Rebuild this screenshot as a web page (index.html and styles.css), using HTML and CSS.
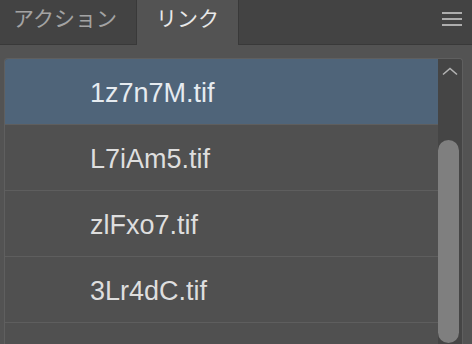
FILE: index.html
```html
<!DOCTYPE html>
<html lang="ja">
<head>
<meta charset="utf-8">
<link rel="stylesheet" href="styles.css">
</head>
<body>
<div class="panel">
  <div class="tabs">
    <div class="tab">アクション</div>
    <div class="tab tab-active">リンク</div>
    <div class="tab-rest">
      <svg class="menu" width="20" height="14" viewBox="0 0 20 14">
        <rect x="0" y="0" width="20" height="2" fill="#adadad"/>
        <rect x="0" y="6" width="20" height="2" fill="#adadad"/>
        <rect x="0" y="12" width="20" height="2" fill="#adadad"/>
      </svg>
    </div>
  </div>
  <div class="body">
    <div class="list">
      <div class="rows">
        <div class="row row-selected">1z7n7M.tif</div>
        <div class="row">L7iAm5.tif</div>
        <div class="row">zlFxo7.tif</div>
        <div class="row">3Lr4dC.tif</div>
        <div class="row"></div>
      </div>
      <div class="scrollbar">
        <svg class="chev" width="16" height="9" viewBox="0 0 16 9">
          <polyline points="1,7.5 8,1.5 15,7.5" fill="none" stroke="#b3b3b3" stroke-width="1.6"/>
        </svg>
        <div class="thumb"></div>
      </div>
    </div>
  </div>
</div>
</body>
</html>
```

FILE: styles.css
```css
html, body {
  margin: 0;
  padding: 0;
  background: #535353;
  overflow: hidden;
  height: 344px;
}
.panel {
  width: 472px;
  height: 344px;
  overflow: hidden;
  font-family: "Liberation Sans", "Noto Sans CJK JP", sans-serif;
}
.tabs {
  display: flex;
  height: 45px;
}
.tab {
  width: 137px;
  box-sizing: border-box;
  background: #434343;
  border-right: 1px solid #393939;
  border-bottom: 1px solid #393939;
  color: #a3a3a3;
  font-family: "Noto Sans CJK JP", sans-serif;
  font-size: 21px;
  line-height: 35px;
  padding-left: 13px;
}
.tab-active {
  width: 101px;
  background: #535353;
  border: none;
  color: #e8e8e8;
  padding-left: 19px;
}
.tab-rest {
  flex: 1;
  box-sizing: border-box;
  background: #434343;
  border-left: 1px solid #393939;
  border-bottom: 1px solid #393939;
  display: flex;
  justify-content: flex-end;
  padding: 12px 10px 0 0;
}
.menu {
  display: block;
}
.body {
  padding: 13px 9px 0 4px;
}
.list {
  display: flex;
  border: 1px solid #5f5f5f;
  border-bottom: none;
  border-radius: 4px 4px 0 0;
  height: 285px;
  background: #505050;
  overflow: hidden;
}
.rows {
  flex: 1;
}
.row {
  height: 62px;
  padding-top: 3px;
  border-bottom: 1px solid #5e5e5e;
  display: flex;
  align-items: center;
  padding-left: 85px;
  color: #dedede;
  font-size: 27px;
}
.row-selected {
  background: #4f6479;
  color: #e6ebf0;
}
.scrollbar {
  width: 24px;
  background: #454545;
  display: flex;
  flex-direction: column;
  align-items: center;
}
.chev {
  display: block;
  margin-top: 8px;
  margin-left: -1px;
}
.thumb {
  width: 21px;
  height: 203px;
  margin-top: 64px;
  margin-right: 3px;
  border-radius: 11px;
  background: #7f7f7f;
}
```
